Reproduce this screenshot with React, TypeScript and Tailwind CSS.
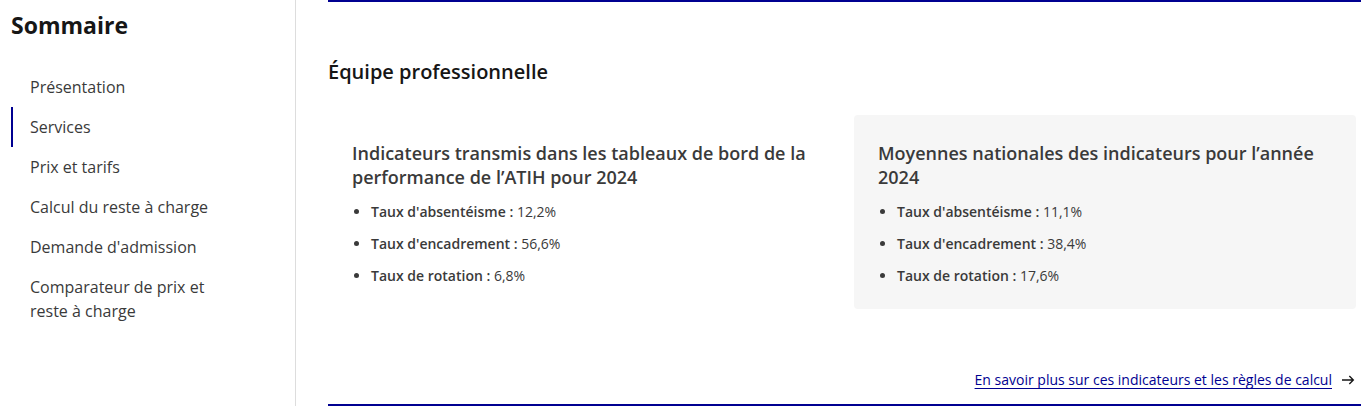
import React from "react";

const items = [
  "Présentation",
  "Services",
  "Prix et tarifs",
  "Calcul du reste à charge",
  "Demande d'admission",
  "Comparateur de prix et reste à charge",
];

function Card({ title, rows, grey }: { title: string; rows: [string, string][]; grey?: boolean }) {
  return (
    <div className={`rounded px-6 pt-[26px] pb-[21px] ${grey ? "bg-[#f6f6f6]" : ""}`}>
      <h3 className="text-[18px] leading-[24px] font-semibold text-[#3a3a3a]">{title}</h3>
      <ul className="mt-[11px] flex flex-col gap-[8px] pl-[19px] list-disc text-[14px] leading-[24px] text-[#3a3a3a]">
        {rows.map(([k, v]) => (
          <li key={k} className="marker:text-[#3a3a3a]">
            <span className="font-semibold">{k} :</span> {v}
          </li>
        ))}
      </ul>
    </div>
  );
}

export default function App() {
  return (
    <div className="flex w-[1361px] h-[406px] bg-white overflow-hidden" style={{ fontFamily: "'Open Sans', 'Noto Sans', sans-serif" }}>
      <aside className="w-[296px] shrink-0 border-r border-[#dddddd] pl-[11px] pr-4">
        <h2 className="mt-[9px] text-[23px] leading-[32px] font-bold text-[#161616]">Sommaire</h2>
        <nav className="mt-[26px] flex flex-col">
          {items.map((t) => (
            <a
              key={t}
              className={`py-[8px] pl-[17px] pr-[60px] text-[16px] leading-[24px] text-[#3a3a3a] border-l-2 ${
                t === "Services" ? "border-[#000091]" : "border-transparent"
              }`}
            >
              {t}
            </a>
          ))}
        </nav>
      </aside>
      <main className="flex-1 pl-8 flex flex-col">
        <div className="h-[2px] bg-[#000091]" />
        <div className="pr-[5px] flex-1 flex flex-col">
          <h2 className="mt-[56px] text-[20px] leading-[28px] font-semibold text-[#161616]">Équipe professionnelle</h2>
          <div className="mt-[29px] grid grid-cols-2 gap-6">
            <Card
              title="Indicateurs transmis dans les tableaux de bord de la performance de l’ATIH pour 2024"
              rows={[
                ["Taux d'absentéisme", "12,2%"],
                ["Taux d'encadrement", "56,6%"],
                ["Taux de rotation", "6,8%"],
              ]}
            />
            <Card
              grey
              title="Moyennes nationales des indicateurs pour l’année 2024"
              rows={[
                ["Taux d'absentéisme", "11,1%"],
                ["Taux d'encadrement", "38,4%"],
                ["Taux de rotation", "17,6%"],
              ]}
            />
          </div>
          <div className="mt-auto mb-[12px] flex justify-end">
            <a className="flex items-center gap-[8px] text-[14px] leading-[24px] text-[#000091]">
              <span className="underline underline-offset-[3px]">En savoir plus sur ces indicateurs et les règles de calcul</span>
              <svg width="16" height="16" viewBox="0 0 24 24" fill="none" stroke="#161616" strokeWidth="2">
                <path d="M3 12h17M14 6l6 6-6 6" />
              </svg>
            </a>
          </div>
        </div>
        <div className="h-[2px] bg-[#000091]" />
      </main>
    </div>
  );
}
